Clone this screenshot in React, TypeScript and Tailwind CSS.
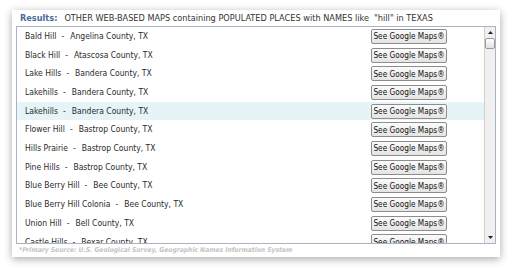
import React from "react";

const places: [string, string][] = [
  ["Bald Hill", "Angelina County, TX"],
  ["Black Hill", "Atascosa County, TX"],
  ["Lake Hills", "Bandera County, TX"],
  ["Lakehills", "Bandera County, TX"],
  ["Lakehills", "Bandera County, TX"],
  ["Flower Hill", "Bastrop County, TX"],
  ["Hills Prairie", "Bastrop County, TX"],
  ["Pine Hills", "Bastrop County, TX"],
  ["Blue Berry Hill", "Bee County, TX"],
  ["Blue Berry Hill Colonia", "Bee County, TX"],
  ["Union Hill", "Bell County, TX"],
  ["Castle Hills", "Bexar County, TX"],
];

export default function App() {
  return (
    <div
      className="h-[268px] w-[512px] overflow-hidden bg-white pl-[12px] pt-[10px]"
      style={{ fontFamily: "'DejaVu Sans Condensed', 'DejaVu Sans', sans-serif" }}
    >
      <div className="flex h-[247px] w-[488px] flex-col bg-white px-[4px] shadow-[0_2px_8px_rgba(0,0,0,0.35)]">
        <div className="flex h-[16px] items-center pl-[4px] pt-[2px] text-[9.1px] text-[#333]">
          <span className="font-bold text-[#4a6c9b]">Results:</span>
          <span className="ml-[7px] whitespace-pre">OTHER WEB-BASED MAPS containing POPULATED PLACES with NAMES like  "hill" in TEXAS</span>
        </div>
        <div className="flex h-[218px] border border-[#a8b4c4]">
          <div className="flex-1 overflow-hidden">
            {places.map(([name, county], i) => (
              <div
                key={i}
                className={`flex h-[18.7px] shrink-0 items-center justify-between pl-[8px] pr-[37px] text-[8.5px] text-[#2a2a2a] ${i === 4 ? "bg-[#e6f3f7]" : ""}`}
              >
                <span className="flex whitespace-nowrap">
                  {name}
                  <span className="ml-[5px] mr-[6px]">-</span>
                  {county}
                </span>
                <button className="h-[15px] w-[76px] whitespace-nowrap rounded-[2px] border border-[#8d8d8d] bg-gradient-to-b from-[#fbfbfb] to-[#e4e4e4] text-[8.2px] leading-none text-[#111]">
                  See Google Maps®
                </button>
              </div>
            ))}
          </div>
          <div className="flex w-[11px] flex-col border-l border-[#d0d0d0] bg-[#f0f0f0]">
            <div className="flex h-[11px] items-center justify-center">
              <svg width="5" height="3" viewBox="0 0 5 3"><path d="M2.5 0 L5 3 L0 3 Z" fill="#222" /></svg>
            </div>
            <div className="h-[11px] rounded-[2px] border border-[#9a9a9a] bg-gradient-to-b from-white to-[#e2e2e2]" />
            <div className="flex-1" />
            <div className="flex h-[11px] items-center justify-center">
              <svg width="5" height="3" viewBox="0 0 5 3"><path d="M0 0 L5 0 L2.5 3 Z" fill="#222" /></svg>
            </div>
          </div>
        </div>
        <div className="pl-[3px] pt-[1px] text-[6.7px] font-bold italic text-[#c4c4c4]">
          *Primary Source: U.S. Geological Survey, Geographic Names Information System
        </div>
      </div>
    </div>
  );
}
